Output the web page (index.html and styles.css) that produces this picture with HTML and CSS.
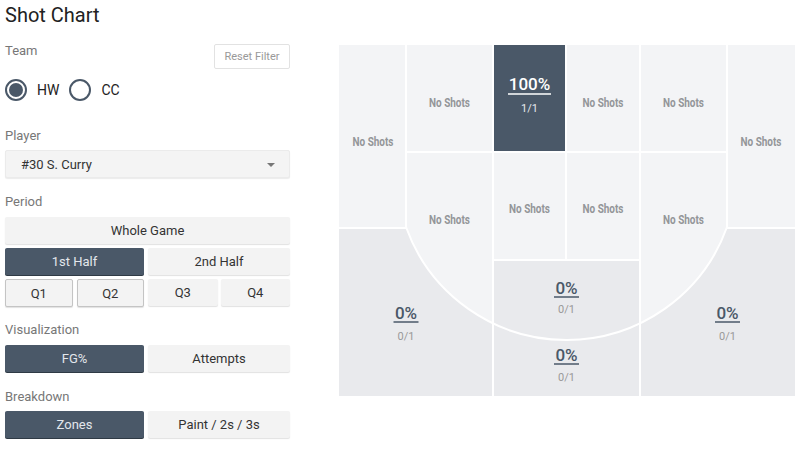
FILE: index.html
```html
<!DOCTYPE html>
<html>
<head>
<meta charset="utf-8">
<link rel="stylesheet" href="styles.css">
</head>
<body>
<div class="page">
  <h1 class="title">Shot Chart</h1>
  <div class="main">
    <div class="panel">
      <div class="team-row">
        <span class="label">Team</span>
        <button class="reset">Reset Filter</button>
      </div>
      <div class="radios">
        <span class="radio checked"></span><span class="radio-text">HW</span>
        <span class="radio"></span><span class="radio-text">CC</span>
      </div>
      <div class="label lbl-player">Player</div>
      <div class="select"><span>#30 S. Curry</span><span class="caret"></span></div>
      <div class="label lbl-section">Period</div>
      <div class="btn-row"><button class="btn">Whole Game</button></div>
      <div class="btn-row"><button class="btn dark first">1st Half</button><button class="btn">2nd Half</button></div>
      <div class="btn-row">
        <div class="group first"><button class="btn bordered">Q1</button><button class="btn bordered">Q2</button></div>
        <div class="group"><button class="btn">Q3</button><button class="btn">Q4</button></div>
      </div>
      <div class="label lbl-section2">Visualization</div>
      <div class="btn-row"><button class="btn dark first">FG%</button><button class="btn">Attempts</button></div>
      <div class="label lbl-section3">Breakdown</div>
      <div class="btn-row"><button class="btn dark first">Zones</button><button class="btn">Paint / 2s / 3s</button></div>
    </div>
    <div class="chart">
      <svg width="456" height="351" viewBox="0 0 456 351">
        <rect x="0" y="0" width="456" height="351" class="z-light"/>
        <path class="z-mid" d="M0,183 L67,183 A170.5,170.5 0 0,0 154,278.3 L154,351 L0,351 Z"/>
        <path class="z-mid" d="M456,183 L388,183 A170.5,170.5 0 0,1 301,278.3 L301,351 L456,351 Z"/>
        <rect class="z-mid" x="154" y="215" width="147" height="136"/>
        <rect class="z-dark" x="154" y="0" width="73" height="107"/>
        <g class="lines">
          <line x1="67" y1="0" x2="67" y2="183"/>
          <line x1="388" y1="0" x2="388" y2="183"/>
          <line x1="0" y1="183" x2="67" y2="183"/>
          <line x1="388" y1="183" x2="456" y2="183"/>
          <line x1="154" y1="0" x2="154" y2="351"/>
          <line x1="301" y1="0" x2="301" y2="351"/>
          <line x1="67" y1="107" x2="388" y2="107"/>
          <line x1="227" y1="0" x2="227" y2="215"/>
          <line x1="154" y1="215" x2="301" y2="215"/>
          <path d="M67,182 A170.5,170.5 0 0,0 388,182"/>
        </g>
        <g class="noshots">
          <text x="34" y="97" textLength="41" lengthAdjust="spacingAndGlyphs">No Shots</text>
          <text x="110.5" y="58" textLength="41" lengthAdjust="spacingAndGlyphs">No Shots</text>
          <text x="264" y="58" textLength="41" lengthAdjust="spacingAndGlyphs">No Shots</text>
          <text x="344.5" y="58" textLength="41" lengthAdjust="spacingAndGlyphs">No Shots</text>
          <text x="422" y="97" textLength="41" lengthAdjust="spacingAndGlyphs">No Shots</text>
          <text x="110.5" y="175" textLength="41" lengthAdjust="spacingAndGlyphs">No Shots</text>
          <text x="190.5" y="164" textLength="41" lengthAdjust="spacingAndGlyphs">No Shots</text>
          <text x="264" y="164" textLength="41" lengthAdjust="spacingAndGlyphs">No Shots</text>
          <text x="344.5" y="175" textLength="41" lengthAdjust="spacingAndGlyphs">No Shots</text>
        </g>
        <text class="pct light" x="190.5" y="39">100%</text>
        <line class="ul light" x1="169" y1="49" x2="212" y2="49"/>
        <text class="frac light" x="190.5" y="63">1/1</text>

        <text class="pct" x="67" y="268">0%</text>
        <line class="ul" x1="54.5" y1="277" x2="79.5" y2="277"/>
        <text class="frac" x="67" y="291">0/1</text>

        <text class="pct" x="227.5" y="243">0%</text>
        <line class="ul" x1="215" y1="252" x2="240" y2="252"/>
        <text class="frac" x="227.5" y="264">0/1</text>

        <text class="pct" x="227.5" y="310">0%</text>
        <line class="ul" x1="215" y1="319" x2="240" y2="319"/>
        <text class="frac" x="227.5" y="332">0/1</text>

        <text class="pct" x="388.5" y="268">0%</text>
        <line class="ul" x1="376" y1="277" x2="401" y2="277"/>
        <text class="frac" x="388.5" y="291">0/1</text>
      </svg>
    </div>
  </div>
</div>
</body>
</html>
```

FILE: styles.css
```css
* { box-sizing: border-box; }
body {
  margin: 0;
  background: #fff;
  font-family: Roboto, "Liberation Sans", Arial, sans-serif;
  color: #333;
}
.page { padding: 0 5px; }
.title {
  margin: 0;
  height: 34px;
  padding-top: 3px;
  font-size: 20px;
  line-height: 24px;
  font-weight: 400;
  color: #222;
}
.main { display: flex; align-items: flex-start; }
.panel { width: 285px; }
.label { font-size: 13px; line-height: 16px; color: #777; }
.team-row {
  display: flex;
  justify-content: space-between;
  align-items: flex-start;
  padding-top: 10px;
}
.team-row .label { margin-top: -1px; }
.reset {
  font-family: inherit;
  width: 76px;
  height: 25px;
  background: #fff;
  border: 1px solid #e2e2e2;
  border-radius: 2px;
  font-size: 11px;
  color: #999;
  padding: 0;
}
.radios {
  display: flex;
  align-items: center;
  margin-top: 10px;
  height: 22px;
}
.radio {
  width: 22px;
  height: 22px;
  border-radius: 50%;
  border: 2px solid #4a5868;
  background: #fff;
  position: relative;
}
.radio.checked::after {
  content: "";
  position: absolute;
  left: 2px; top: 2px;
  width: 14px; height: 14px;
  border-radius: 50%;
  background: #4a5868;
}
.radio-text {
  font-size: 14px;
  color: #222;
  margin-left: 10px;
  margin-right: 10px;
}
.lbl-player { margin-top: 27px; }
.select {
  margin-top: 6px;
  height: 28px;
  background: #f4f4f4;
  border: 1px solid #ebebeb;
  border-radius: 2px;
  box-shadow: 0 1px 1px rgba(0,0,0,0.08);
  display: flex;
  align-items: center;
  justify-content: space-between;
  padding: 0 14px 0 15px;
  font-size: 13px;
  color: #333;
}
.caret {
  width: 0; height: 0;
  border-left: 4px solid transparent;
  border-right: 4px solid transparent;
  border-top: 4px solid #777;
  margin-top: 1px;
}
.lbl-section { margin-top: 16px; margin-bottom: 7px; }
.lbl-section2 { margin-top: 15px; margin-bottom: 7px; }
.lbl-section3 { margin-top: 17px; margin-bottom: 6px; }
.btn-row {
  display: flex;
  gap: 4px;
  margin-bottom: 4px;
}
.btn-row > .first { flex: 0 0 139px; }
.group { display: flex; flex: 1; gap: 3px; }
.group.first { gap: 4px; }
.btn {
  flex: 1;
  height: 27px;
  font-family: inherit;
  font-size: 13px;
  color: #333;
  background: #f3f3f3;
  border: none;
  border-radius: 2px;
  box-shadow: 0 1px 1px rgba(0,0,0,0.12);
  padding: 0;
}
.btn.dark {
  background: #4a5868;
  color: #e3e7ec;
  box-shadow: 0 1px 0 #2f3a45;
}
.btn.bordered {
  border: 1px solid #c4c4c4;
  height: 28px;
}
.chart {
  margin-left: 49px;
  margin-top: 11px;
}
.chart svg { display: block; }
.z-light { fill: #f3f4f6; }
.z-mid { fill: #e9eaed; }
.z-dark { fill: #4a5868; }
.lines line, .lines path { stroke: #fff; stroke-width: 2; fill: none; }
.noshots text {
  font-family: Roboto, "Liberation Sans", sans-serif;
  font-size: 12px;
  font-weight: 700;
  fill: #939699;
  text-anchor: middle;
  dominant-baseline: central;
}
.pct {
  font-family: Roboto, "Liberation Sans", sans-serif;
  font-size: 17px;
  font-weight: 500;
  fill: #4a5868;
  text-anchor: middle;
  dominant-baseline: central;
}
.frac {
  font-family: Roboto, "Liberation Sans", sans-serif;
  font-size: 11px;
  fill: #999;
  text-anchor: middle;
  dominant-baseline: central;
}
.pct.light { fill: #fff; }
.frac.light { fill: #e6e9ee; }
.ul { stroke: #4a5868; stroke-width: 1.5; }
.ul.light { stroke: #fff; }
```
